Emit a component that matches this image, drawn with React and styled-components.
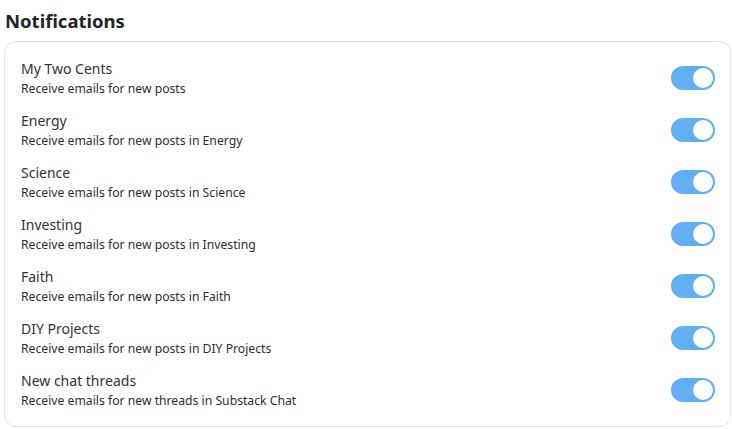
import React from "react";
import styled, { createGlobalStyle } from "styled-components";

const GlobalStyle = createGlobalStyle`
  body {
    margin: 0;
    background: #fff;
    font-family: "Noto Sans", "Open Sans", sans-serif;
    color: #333;
  }
`;

const items = [
  { title: "My Two Cents", desc: "Receive emails for new posts" },
  { title: "Energy", desc: "Receive emails for new posts in Energy" },
  { title: "Science", desc: "Receive emails for new posts in Science" },
  { title: "Investing", desc: "Receive emails for new posts in Investing" },
  { title: "Faith", desc: "Receive emails for new posts in Faith" },
  { title: "DIY Projects", desc: "Receive emails for new posts in DIY Projects" },
  { title: "New chat threads", desc: "Receive emails for new threads in Substack Chat" },
];

const App = () => {
  return (
    <Page>
      <GlobalStyle />
      <Heading>Notifications</Heading>
      <Card>
        {items.map((item) => (
          <Row key={item.title}>
            <Text>
              <Title>{item.title}</Title>
              <Desc>{item.desc}</Desc>
            </Text>
            <Toggle on />
          </Row>
        ))}
      </Card>
    </Page>
  );
};

export default App;

const Page = styled.div`
  width: 732px;
  padding: 0 1px 0 4px;
  box-sizing: border-box;
`;

const Heading = styled.h2`
  margin: 0;
  padding: 7px 0 0 1px;
  height: 41px;
  box-sizing: border-box;
  font-size: 18.5px;
  line-height: 28px;
  font-weight: 700;
  color: #242424;
`;

const Card = styled.div`
  border: 1px solid #e3e3e3;
  border-radius: 12px;
  padding: 10px 15px 10px 16px;
`;

const Row = styled.div`
  display: flex;
  align-items: center;
  justify-content: space-between;
  height: 52px;
`;

const Text = styled.div`
  display: flex;
  flex-direction: column;
`;

const Title = styled.div`
  font-size: 14px;
  line-height: 20px;
  color: #333;
`;

const Desc = styled.div`
  font-size: 12.2px;
  line-height: 19px;
  color: #2e2e2e;
`;

const Toggle = styled.div`
  position: relative;
  width: 44px;
  height: 24px;
  border-radius: 12px;
  background: ${(p) => (p.on ? "#62aef3" : "#ccc")};

  &::after {
    content: "";
    position: absolute;
    top: 2px;
    left: ${(p) => (p.on ? "22px" : "2px")};
    width: 20px;
    height: 20px;
    border-radius: 50%;
    background: #fff;
  }
`;
